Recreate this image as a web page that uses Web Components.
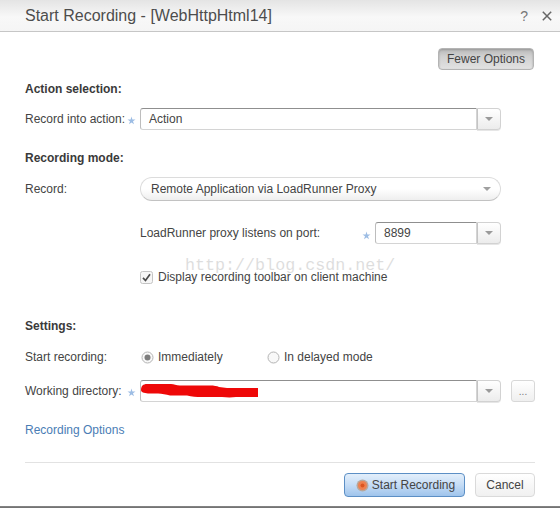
<!DOCTYPE html>
<html>
<head>
<meta charset="utf-8">
<title>Start Recording</title>
<style>
  html, body { margin: 0; height: 100%; background: #fff; }
  body { font: 12px "Liberation Sans", Arial, sans-serif; color: #333; overflow: hidden; }
</style>
</head>
<body>
<lr-dialog heading="Start Recording - [WebHttpHtml14]">
  <lr-row top="16" end><lr-button kind="toggle" style="margin-right:1px">Fewer Options</lr-button></lr-row>

  <lr-heading top="10">Action selection:</lr-heading>
  <lr-row top="12" label="Record into action:" star>
    <lr-combo value="Action" width="361"></lr-combo>
  </lr-row>

  <lr-heading top="19">Recording mode:</lr-heading>
  <lr-row top="12" label="Record:">
    <lr-select value="Remote Application via LoadRunner Proxy"></lr-select>
  </lr-row>
  <lr-row top="21" label="">
    <lr-port label="LoadRunner proxy listens on port:" value="8899"></lr-port>
  </lr-row>
  <lr-row top="25" label="" short>
    <lr-option type="check" checked>Display recording toolbar on client machine</lr-option>
  </lr-row>

  <lr-heading top="32">Settings:</lr-heading>
  <lr-row top="16" label="Start recording:" short>
    <lr-option type="radio" checked width="124" inset="2">Immediately</lr-option>
    <lr-option type="radio" gap="4">In delayed mode</lr-option>
  </lr-row>
  <lr-row top="15" label="Working directory:" star>
    <lr-combo width="361" scribble></lr-combo>
    <lr-button kind="small" style="margin-left:10px">...</lr-button>
  </lr-row>
  <lr-row top="20" short><lr-link>Recording Options</lr-link></lr-row>

  <lr-footer>
    <lr-button kind="primary" style="margin-right:10px"><lr-rec-dot></lr-rec-dot>Start Recording</lr-button>
    <lr-button kind="plain">Cancel</lr-button>
  </lr-footer>
</lr-dialog>
<lr-watermark>http://blog.csdn.net/</lr-watermark>

<script>
const STAR = `<svg width="9" height="9" viewBox="0 0 9 9"><path d="M4.500 .5l.9 2.900h3.100L6 5.200l1 3-2.500-1.800L2 8.200l1-3L.5 3.400h3.100z" fill="#9dbde4"/></svg>`;

function shell(el, html) {
  el.attachShadow({ mode: 'open' }).innerHTML = html;
}

class LrDialog extends HTMLElement {
  connectedCallback() {
    shell(this, `
      <style>
        :host { display: block; height: 508px; box-sizing: border-box; position: relative; }
        header {
          height: 31px; box-sizing: content-box; border-bottom: 1px solid #c6c6c6;
          background: linear-gradient(#e4e4e4, #f8f8f8 55%, #f5f5f5);
          display: flex; align-items: center; padding: 0 25px;
          font-size: 16px; color: #4d4d4d;
        }
        h1 { font: inherit; margin: 0; flex: 1; }
        .help { font-size: 14px; color: #777; margin-right: 14px; }
        svg { display: block; margin-right: -17px; }
        main { padding: 0 25px; }
        .edge { position: absolute; left: 0; right: 0; bottom: 0; height: 2px; background: linear-gradient(#8a8a8a, #6d6d6d); }
      </style>
      <header>
        <h1>${this.getAttribute('heading')}</h1>
        <span class="help">?</span>
        <svg width="10" height="10" viewBox="0 0 10 10"><path d="M.8.8l8.400 8.400M9.200.8L.8 9.200" stroke="#666" stroke-width="1.500" fill="none"/></svg>
      </header>
      <main><slot></slot></main>
      <div class="edge"></div>`);
  }
}

class LrHeading extends HTMLElement {
  connectedCallback() {
    shell(this, `
      <style>
        :host { display: block; height: 16px; line-height: 18px; font-weight: bold; color: #3a3a3a; margin-top: ${this.getAttribute('top')}px; }
      </style><slot></slot>`);
  }
}

// label column + optional required star + the control(s)
class LrRow extends HTMLElement {
  connectedCallback() {
    const hasLabel = this.hasAttribute('label');
    const h = this.hasAttribute('short') ? 16 : 'auto';
    shell(this, `
      <style>
        :host { display: flex; align-items: center; margin-top: ${this.getAttribute('top')}px; height: ${h === 'auto' ? 'auto' : h + 'px'};
          ${this.hasAttribute('end') ? 'justify-content: flex-end;' : ''} }
        .label { width: 115px; flex: none; display: flex; align-items: center; color: #444; white-space: nowrap; position: relative; }
        .star { position: absolute; right: 4px; top: 4px; width: 9px; height: 9px; }
        .star svg { display: block; }
        .col { display: flex; align-items: center; flex: 1; ${this.hasAttribute('end') ? 'justify-content: flex-end;' : ''} }
      </style>
      ${hasLabel ? `<div class="label">${this.getAttribute('label')}${this.hasAttribute('star') ? `<span class="star">${STAR}</span>` : ''}</div>` : ''}
      <div class="col"><slot></slot></div>`);
  }
}

const FIELD_CSS = `
  .box { height: 22px; box-sizing: border-box; border: 1px solid #d4d4d4; border-top-color: #8f8f8f; border-left-color: #bdbdbd;
    border-radius: 3px 0 0 3px; background: #fff; padding: 0 8px; line-height: 20px; color: #444; overflow: hidden; position: relative; }
  .arrow { width: 24px; height: 22px; box-sizing: border-box; border: 1px solid #d2d2d2; border-left-color: #c4c4c4; border-radius: 0 4px 4px 0;
    background: linear-gradient(#fff, #ececec); display: flex; align-items: center; justify-content: center; box-shadow: 0 1px 0 #e6e6e6; }
  .arrow i { border: 4px solid transparent; border-top: 4px solid #9a9a9a; border-bottom: 0; display: block; }
`;

class LrCombo extends HTMLElement {
  connectedCallback() {
    const w = +this.getAttribute('width');
    const scribble = this.hasAttribute('scribble') ? `
      <svg width="118" height="15" viewBox="0 0 118 15" style="position:absolute;left:-1px;top:2px">
        <path d="M1 7C1 3 3 1 7 1h24c3 0 5 1.500 9 1.500h30c4 0 7 .5 9 1.500l8 1h27c5 0 10 0 10 5 0 4-3 4-8 4H96c-4 .5-9 .5-14 0H62c-6 0-10 0-15-1.500H30c-4-1-8-2-12-2H8C4 10 1 9.500 1 7z" fill="#ee0808"/>
      </svg>` : '';
    shell(this, `
      <style>
        :host { display: flex; width: ${w}px; flex: none; }
        ${FIELD_CSS}
        .box { flex: 1; }
      </style>
      <div class="box">${this.getAttribute('value') || ''}${scribble}</div>
      <div class="arrow"><i></i></div>`);
  }
}

class LrPort extends HTMLElement {
  connectedCallback() {
    shell(this, `
      <style>
        :host { display: flex; align-items: center; width: 361px; }
        ${FIELD_CSS}
        .text { width: 222px; color: #444; }
        .star { width: 13px; position: relative; top: 2px; }
        .star svg { display: block; }
        .box { width: 102px; }
      </style>
      <span class="text">${this.getAttribute('label')}</span>
      <span class="star">${STAR}</span>
      <div class="box">${this.getAttribute('value')}</div>
      <div class="arrow"><i></i></div>`);
  }
}

class LrSelect extends HTMLElement {
  connectedCallback() {
    shell(this, `
      <style>
        :host { display: flex; align-items: center; width: 361px; height: 24px; box-sizing: border-box;
          border: 1px solid #dcdcdc; border-bottom-color: #c2c2c2; border-radius: 12px; padding: 0 9px 0 10px;
          background: linear-gradient(#fff, #fff 50%, #eeeeee); color: #444; }
        span { flex: 1; }
        i { border: 4px solid transparent; border-top: 4px solid #a0a0a0; border-bottom: 0; }
      </style>
      <span>${this.getAttribute('value')}</span><i></i>`);
  }
}

class LrButton extends HTMLElement {
  connectedCallback() {
    const kinds = {
      toggle: 'width:96px;height:22px;border:1px solid #b4b4b4;border-radius:4px;background:linear-gradient(#b8b8b8,#d0d0d0 35%,#e2e2e2);box-shadow:inset 0 1px 2px #9a9a9a;',
      small: 'width:24px;height:22px;border:1px solid #d8d8d8;border-radius:3px;background:linear-gradient(#fff,#efefef);color:#777;font-size:10px;',
      primary: 'width:121px;height:24px;border:1px solid #5c8fc5;border-radius:4px;background:linear-gradient(#e3effb,#c5dcf5 50%,#9fc4ec);padding-left:2px;',
      plain: 'width:60px;height:24px;border:1px solid #dadada;border-radius:4px;background:linear-gradient(#fff,#f0f0f0);'
    };
    shell(this, `
      <style>
        :host { display: flex; align-items: center; justify-content: center; box-sizing: border-box; flex: none; color: #444; white-space: nowrap;
          ${kinds[this.getAttribute('kind')]} }
      </style><slot></slot>`);
  }
}

class LrRecDot extends HTMLElement {
  connectedCallback() {
    shell(this, `
      <style>
        :host { display: inline-block; width: 13px; height: 13px; margin-right: 3px; flex: none; }
        svg { display: block; }
      </style>
      <svg width="13" height="13" viewBox="0 0 13 13">
        <circle cx="6.500" cy="6.500" r="6" fill="#b9a79b"/>
        <circle cx="6.500" cy="6.500" r="4.500" fill="#ee8050"/>
        <circle cx="6.500" cy="6.500" r="2" fill="#dc5520"/>
      </svg>`);
  }
}

class LrOption extends HTMLElement {
  connectedCallback() {
    const isCheck = this.getAttribute('type') === 'check';
    const on = this.hasAttribute('checked');
    const mark = isCheck ? `
      <svg width="13" height="13" viewBox="0 0 13 13">
        <rect x=".5" y=".5" width="12" height="12" rx="2" fill="#f6f6f6" stroke="#c4c4c4"/>
        ${on ? '<path d="M3 6.800l2.500 2.700L10 3.300" fill="none" stroke="#4a4a4a" stroke-width="1.700"/>' : ''}
      </svg>` : `
      <svg width="13" height="13" viewBox="0 0 13 13">
        <circle cx="6.500" cy="6.500" r="5.500" fill="#f8f8f8" stroke="#b4b4b4"/>
        ${on ? '<circle cx="6.500" cy="6.500" r="3" fill="#7d7d7d"/>' : ''}
      </svg>`;
    const w = this.getAttribute('width');
    const inset = +this.getAttribute('inset') || 0;
    const gap = this.getAttribute('gap') || (5 - inset / 2);
    shell(this, `
      <style>
        :host { display: flex; align-items: center; gap: ${gap}px; color: #444; white-space: nowrap; ${w ? `width:${+w + 2}px;` : ''} ${inset ? `margin-left:${inset / 2}px;` : ''} }
        svg { display: block; flex: none; }
      </style>${mark}<slot></slot>`);
  }
}

class LrLink extends HTMLElement {
  connectedCallback() {
    shell(this, `<style>:host { display: inline-block; color: #4a7db5; margin-left: 0; cursor: pointer; }</style><slot></slot>`);
  }
}

class LrFooter extends HTMLElement {
  connectedCallback() {
    shell(this, `
      <style>
        :host { display: flex; justify-content: flex-end; margin-top: 24px; padding-top: 10px; border-top: 1px solid #e2e2e2; }
      </style><slot></slot>`);
  }
}

class LrWatermark extends HTMLElement {
  connectedCallback() {
    shell(this, `
      <style>
        :host { position: absolute; left: 185px; top: 256px; font: 16.700px "Liberation Mono", monospace; color: #000; opacity: .13; white-space: nowrap; pointer-events: none; }
      </style><slot></slot>`);
  }
}

customElements.define('lr-dialog', LrDialog);
customElements.define('lr-heading', LrHeading);
customElements.define('lr-row', LrRow);
customElements.define('lr-combo', LrCombo);
customElements.define('lr-port', LrPort);
customElements.define('lr-select', LrSelect);
customElements.define('lr-button', LrButton);
customElements.define('lr-rec-dot', LrRecDot);
customElements.define('lr-option', LrOption);
customElements.define('lr-link', LrLink);
customElements.define('lr-footer', LrFooter);
customElements.define('lr-watermark', LrWatermark);
</script>
</body>
</html>
